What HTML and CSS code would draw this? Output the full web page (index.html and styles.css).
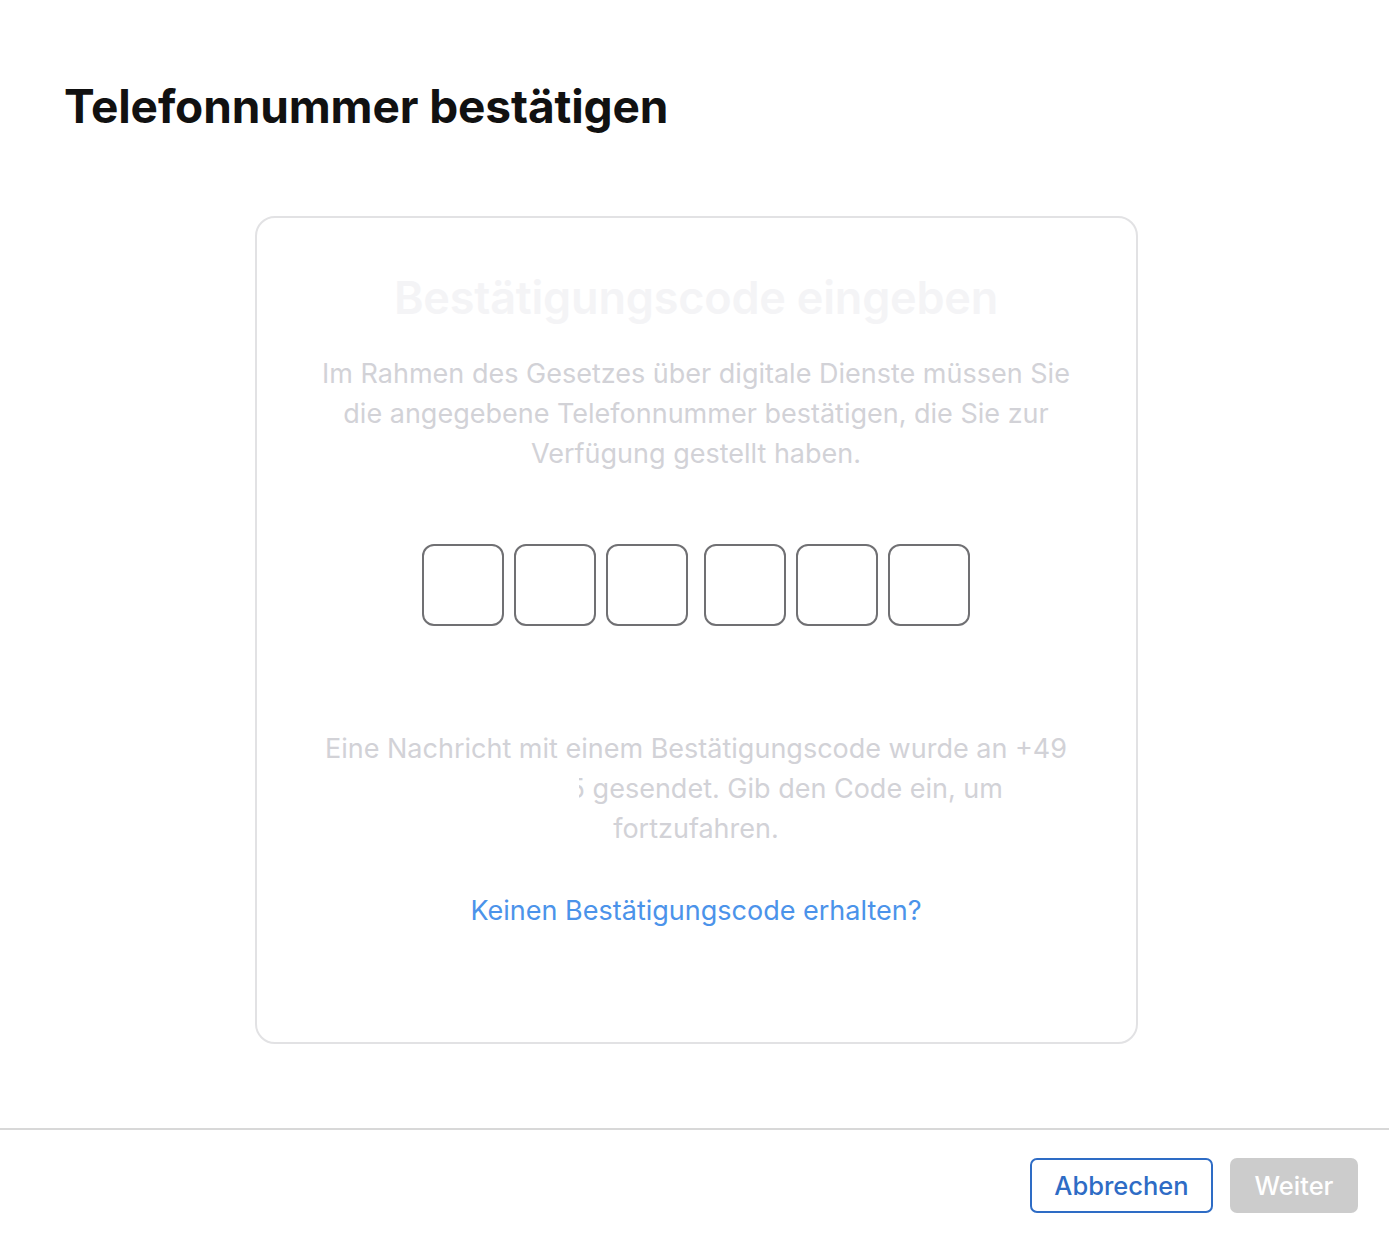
FILE: index.html
```html
<!DOCTYPE html>
<html lang="de">
<head>
<meta charset="utf-8">
<title>Telefonnummer bestätigen</title>
<link rel="stylesheet" href="styles.css">
</head>
<body>
<div class="page">
  <header class="header">
    <h1 class="title">Telefonnummer bestätigen</h1>
  </header>
  <main class="main">
    <section class="card">
      <h2 class="card-title">Bestätigungscode eingeben</h2>
      <p class="card-text">Im Rahmen des Gesetzes über digitale Dienste müssen Sie die angegebene Telefonnummer bestätigen, die Sie zur Verfügung gestellt haben.</p>
      <div class="code">
        <div class="code-group">
          <span class="code-box"></span>
          <span class="code-box"></span>
          <span class="code-box"></span>
        </div>
        <div class="code-group">
          <span class="code-box"></span>
          <span class="code-box"></span>
          <span class="code-box"></span>
        </div>
      </div>
      <p class="card-text sent">Eine Nachricht mit einem Bestätigungscode wurde an +49 <span class="redacted">0151 234567</span><span class="cut">5</span> gesendet. Gib den Code ein, um fortzufahren.</p>
      <a class="resend" href="#">Keinen Bestätigungscode erhalten?</a>
    </section>
  </main>
  <footer class="footer">
    <button class="btn btn-secondary" type="button">Abbrechen</button>
    <button class="btn btn-primary" type="button" disabled>Weiter</button>
  </footer>
</div>
</body>
</html>
```
FILE: styles.css
```css
* { box-sizing: border-box; }
html, body { margin: 0; padding: 0; background: #fff; }
body {
  font-family: Inter, "Noto Sans", "Liberation Sans", sans-serif;
  color: #111;
}
.page {
  width: 1389px;
  height: 1237px;
  display: flex;
  flex-direction: column;
}
.header {
  padding: 78px 0 0 64px;
}
.title {
  margin: 0;
  font-size: 46px;
  line-height: 56px;
  font-weight: 700;
  letter-spacing: -0.12px;
  color: #111;
}
.main {
  display: flex;
  justify-content: center;
  padding-top: 82px;
  padding-left: 3px;
}
.card {
  width: 883px;
  height: 828px;
  border: 2px solid #e2e2e4;
  border-radius: 20px;
  display: flex;
  flex-direction: column;
  align-items: center;
  padding: 52px 60px 0;
  text-align: center;
}
.card-title {
  margin: 0;
  font-size: 45px;
  line-height: 56px;
  font-weight: 600;
  letter-spacing: -0.2px;
  color: #f4f4f6;
}
.card-text {
  margin: 28px 0 0;
  font-size: 27px;
  line-height: 40px;
  font-weight: 400;
  color: #d2d2d7;
  max-width: 760px;
}
.code {
  display: flex;
  gap: 16px;
  margin-top: 70px;
}
.code-group {
  display: flex;
  gap: 10px;
}
.code-box {
  display: block;
  width: 82px;
  height: 82px;
  border: 2px solid #707073;
  border-radius: 12px;
}
.sent {
  margin-top: 103px;
  max-width: 752px;
}
.redacted {
  display: inline-block;
  width: 190px;
  white-space: nowrap;
  vertical-align: top;
  color: transparent;
}
.cut {
  display: inline-block;
  width: 6px;
  overflow: hidden;
  vertical-align: top;
  direction: rtl;
}
.resend {
  margin-top: 42px;
  font-size: 27px;
  line-height: 40px;
  color: #4b93ea;
  text-decoration: none;
}
.footer {
  margin-top: auto;
  height: 109px;
  border-top: 2px solid #d8d8d8;
  display: flex;
  justify-content: flex-end;
  align-items: flex-start;
  gap: 17px;
  padding: 28px 31px 0 0;
}
.btn {
  height: 55px;
  border-radius: 7px;
  font-family: Inter, "Noto Sans", "Liberation Sans", sans-serif;
  font-size: 25.5px;
  font-weight: 500;
  padding: 0 20px;
  cursor: pointer;
}
.btn-secondary {
  width: 183px;
  background: #fff;
  border: 2px solid #2e6cc5;
  color: #2e6cc5;
}
.btn-primary {
  width: 128px;
  background: #cccccc;
  border: 0;
  color: #fff;
}
```
